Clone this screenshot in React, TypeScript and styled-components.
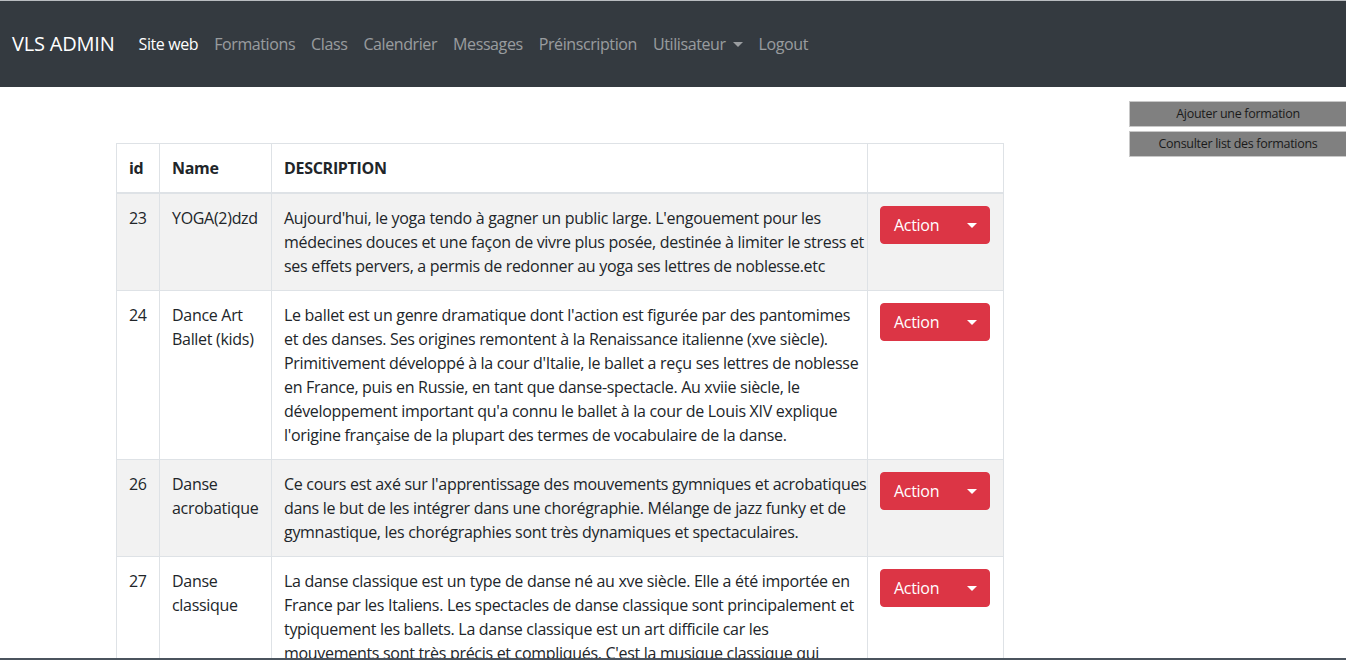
import { styled, createGlobalStyle } from "styled-components"

const GlobalStyle = createGlobalStyle`
  html, body {
    margin: 0;
    padding: 0;
    background: #fff;
    overflow: hidden;
  }
  body {
    font-family: "Segoe UI", "Open Sans", "Noto Sans", sans-serif;
    font-size: 16px;
    line-height: 24px;
    letter-spacing: -0.3px;
    color: #212529;
  }
  * { box-sizing: border-box; }
`

const Navbar = styled.nav`
  height: 87px;
  background-color: #343a40;
  border-top: 1px solid #b9bcc0;
  display: flex;
  align-items: center;
  padding: 0 12px;
`

const Brand = styled.a`
  font-size: 20px;
  line-height: 30px;
  letter-spacing: -0.2px;
  color: #fff;
  margin-right: 16px;
  text-decoration: none;
`

const NavList = styled.ul`
  display: flex;
  list-style: none;
  margin: 0;
  padding: 0;
`

const NavLink = styled.a<{ $active?: boolean }>`
  display: flex;
  align-items: center;
  padding: 0 8px;
  letter-spacing: -0.4px;
  color: ${p => (p.$active ? "#fff" : "rgba(255,255,255,.5)")};
  text-decoration: none;
`

const Caret = styled.span`
  display: inline-block;
  margin-left: 7px;
  border-top: 5px solid currentColor;
  border-left: 5px solid transparent;
  border-right: 5px solid transparent;
`

const Page = styled.div`
  display: flex;
  justify-content: space-between;
`

const Main = styled.main`
  padding: 56px 0 0 116px;
`

const Side = styled.aside`
  display: flex;
  flex-direction: column;
  row-gap: 4px;
  padding-top: 14px;
  width: 217px;
`

const SideButton = styled.button`
  height: 26px;
  background: #808080;
  border: 1px solid #c8c8c8;
  border-right: none;
  color: #1a1a1a;
  font-family: inherit;
  font-size: 12.5px;
  letter-spacing: -0.3px;
  line-height: 18px;
  padding: 0;
`

const Table = styled.table`
  width: 887px;
  table-layout: fixed;
  border-collapse: collapse;
`

const Th = styled.th<{ $w: number }>`
  width: ${p => p.$w}px;
  text-align: left;
  padding: 12px;
  border: 1px solid #dee2e6;
  border-bottom: 2px solid #dee2e6;
  font-weight: 700;
  vertical-align: bottom;
`

const Row = styled.tr<{ $striped: boolean }>`
  background: ${p => (p.$striped ? "#f2f2f2" : "#fff")};
`

const Td = styled.td`
  padding: 12px;
  border: 1px solid #dee2e6;
  vertical-align: top;
  white-space: nowrap;
`

const Lines = styled.div`
  display: flex;
  flex-direction: column;
`

const ActionButton = styled.button`
  width: 110px;
  height: 38px;
  display: flex;
  align-items: center;
  justify-content: space-between;
  padding: 0 12px 0 13px;
  background: #dc3545;
  border: 1px solid #dc3545;
  border-radius: 4px;
  color: #fff;
  font-family: inherit;
  font-size: 16px;
  letter-spacing: -0.3px;
`

const BottomEdge = styled.div`
  position: fixed;
  left: 0;
  right: 0;
  bottom: 0;
  height: 2px;
  background: #4b545e;
`

interface IFormation {
  id: number
  name: string[]
  description: string[]
}

const formations: IFormation[] = [
  {
    id: 23,
    name: ["YOGA(2)dzd"],
    description: [
      "Aujourd'hui, le yoga tendo à gagner un public large. L'engouement pour les",
      "médecines douces et une façon de vivre plus posée, destinée à limiter le stress et",
      "ses effets pervers, a permis de redonner au yoga ses lettres de noblesse.etc",
    ],
  },
  {
    id: 24,
    name: ["Dance Art", "Ballet (kids)"],
    description: [
      "Le ballet est un genre dramatique dont l'action est figurée par des pantomimes",
      "et des danses. Ses origines remontent à la Renaissance italienne (xve siècle).",
      "Primitivement développé à la cour d'Italie, le ballet a reçu ses lettres de noblesse",
      "en France, puis en Russie, en tant que danse-spectacle. Au xviie siècle, le",
      "développement important qu'a connu le ballet à la cour de Louis XIV explique",
      "l'origine française de la plupart des termes de vocabulaire de la danse.",
    ],
  },
  {
    id: 26,
    name: ["Danse", "acrobatique"],
    description: [
      "Ce cours est axé sur l'apprentissage des mouvements gymniques et acrobatiques",
      "dans le but de les intégrer dans une chorégraphie. Mélange de jazz funky et de",
      "gymnastique, les chorégraphies sont très dynamiques et spectaculaires.",
    ],
  },
  {
    id: 27,
    name: ["Danse", "classique"],
    description: [
      "La danse classique est un type de danse né au xve siècle. Elle a été importée en",
      "France par les Italiens. Les spectacles de danse classique sont principalement et",
      "typiquement les ballets. La danse classique est un art difficile car les",
      "mouvements sont très précis et compliqués. C'est la musique classique qui",
    ],
  },
]

const links = ["Formations", "Class", "Calendrier", "Messages", "Préinscription"]

export default function App() {
  return (
    <>
      <GlobalStyle />
      <Navbar>
        <Brand href="#">VLS ADMIN</Brand>
        <NavList>
          <li><NavLink href="#" $active>Site web</NavLink></li>
          {links.map(l => (
            <li key={l}><NavLink href="#">{l}</NavLink></li>
          ))}
          <li><NavLink href="#">Utilisateur<Caret /></NavLink></li>
          <li><NavLink href="#">Logout</NavLink></li>
        </NavList>
      </Navbar>
      <Page>
        <Main>
          <Table>
            <thead>
              <tr>
                <Th $w={43}>id</Th>
                <Th $w={112}>Name</Th>
                <Th $w={596}>DESCRIPTION</Th>
                <Th $w={136}></Th>
              </tr>
            </thead>
            <tbody>
              {formations.map((f, i) => (
                <Row key={f.id} $striped={i % 2 === 0}>
                  <Td>{f.id}</Td>
                  <Td>
                    <Lines>{f.name.map(n => <span key={n}>{n}</span>)}</Lines>
                  </Td>
                  <Td>
                    <Lines>{f.description.map(d => <span key={d}>{d}</span>)}</Lines>
                  </Td>
                  <Td>
                    <ActionButton>
                      Action
                      <Caret />
                    </ActionButton>
                  </Td>
                </Row>
              ))}
            </tbody>
          </Table>
        </Main>
        <Side>
          <SideButton>Ajouter une formation</SideButton>
          <SideButton>Consulter list des formations</SideButton>
        </Side>
      </Page>
      <BottomEdge />
    </>
  )
}
